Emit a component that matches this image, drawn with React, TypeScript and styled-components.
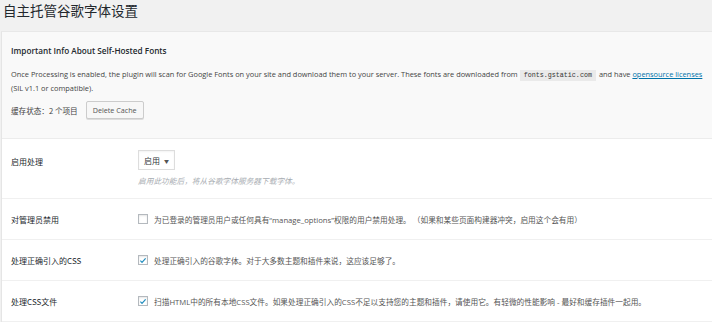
import React from 'react';
import styled, { createGlobalStyle } from 'styled-components';

const GlobalStyle = createGlobalStyle`
  html, body {
    margin: 0;
    padding: 0;
    background: #f1f1f1;
  }
  body {
    font-family: "Open Sans", "Noto Sans", "Noto Sans CJK SC", sans-serif;
    color: #444;
    width: 712px;
    overflow: hidden;
  }
`;

const Page = styled.div`
  padding: 0 0 0 1px;
`;

const Title = styled.h1`
  margin: 0;
  padding: 1px 0 0 2px;
  height: 31px;
  box-sizing: border-box;
  font-family: "Noto Sans CJK SC", sans-serif;
  font-size: 13.5px;
  font-weight: 400;
  line-height: 18px;
  color: #23282d;
`;

const Panel = styled.div`
  background: #fff;
  border-left: 1px solid #e5e5e5;
  border-top: 1px solid #e8e8e8;
`;

const InfoBox = styled.div`
  background: #f9f9f9;
  border-bottom: 1px solid #ececec;
  padding: 13px 4px 18px 9px;
  height: 107px;
  box-sizing: border-box;
`;

const InfoHeading = styled.h3`
  margin: 0 0 11px;
  font-size: 8.2px;
  font-weight: 600;
  line-height: 12px;
  color: #23282d;
`;

const Paragraph = styled.p`
  margin: 0 0 6px;
  font-size: 7.4px;
  line-height: 13px;
  color: #444;
  white-space: nowrap;
`;

const Code = styled.code`
  font-family: "Liberation Mono", "DejaVu Sans Mono", monospace;
  font-size: 6.7px;
  background: #eaeaea;
  padding: 1px 4px 2px;
  margin: 0 3px 0 2px;
  color: #333;
`;

const Link = styled.a`
  color: #0073aa;
  text-decoration: underline;
`;

const CacheRow = styled.div`
  display: flex;
  align-items: center;
  gap: 8px;
  font-family: "Noto Sans CJK SC", sans-serif;
  font-size: 7.6px;
  color: #444;
`;

const Button = styled.button`
  height: 18px;
  padding: 0 6px;
  border: 1px solid #ccc;
  border-radius: 2px;
  background: #f7f7f7;
  box-shadow: 0 1px 0 #ddd;
  font-family: "Open Sans", sans-serif;
  font-size: 7.2px;
  color: #555;
`;

const Row = styled.div<{ $h: number }>`
  display: grid;
  grid-template-columns: 127px 1fr;
  height: ${({ $h }) => $h}px;
  box-sizing: border-box;
  border-bottom: 1px solid #f0f0f0;
  align-items: center;
  padding-left: 9px;
`;

const Label = styled.div<{ $top?: boolean }>`
  font-family: "Noto Sans CJK SC", sans-serif;
  font-size: 8px;
  color: #23282d;
  align-self: ${({ $top }) => ($top ? 'start' : 'center')};
  padding-top: ${({ $top }) => ($top ? '17px' : '0')};
`;

const FieldStack = styled.div`
  display: flex;
  flex-direction: column;
  align-items: flex-start;
  gap: 5px;
  align-self: start;
  padding-top: 11px;
`;

const Select = styled.div`
  display: inline-flex;
  align-items: center;
  gap: 4px;
  height: 20px;
  box-sizing: border-box;
  padding: 0 5px;
  border: 1px solid #ddd;
  background: #fff;
  box-shadow: inset 0 1px 2px rgba(0, 0, 0, 0.05);
  font-family: "Noto Sans CJK SC", sans-serif;
  font-size: 8px;
  white-space: nowrap;
  color: #32373c;
`;

const Caret = styled.span`
  font-size: 5px;
  color: #555;
`;

const Description = styled.div`
  font-family: "Noto Sans CJK SC", sans-serif;
  font-size: 7.7px;
  font-style: italic;
  color: #a8adb2;
`;

const CheckLine = styled.label`
  display: flex;
  align-items: center;
  gap: 6px;
  font-family: "Open Sans", "Noto Sans CJK SC", sans-serif;
  font-size: 7.7px;
  color: #555;
`;

const Box = styled.span`
  width: 10px;
  height: 10px;
  box-sizing: border-box;
  border: 1px solid #b4b9be;
  background: #fff;
  box-shadow: inset 0 1px 2px rgba(0, 0, 0, 0.1);
  display: inline-flex;
  align-items: center;
  justify-content: center;
  flex: none;
`;

function Checkbox({ checked }: { checked?: boolean }) {
  return (
    <Box>
      {checked && (
        <svg width="9" height="9" viewBox="0 0 20 20">
          <path d="M3.5 10.5l4 4 9-10" fill="none" stroke="#1e8cbe" strokeWidth="3" />
        </svg>
      )}
    </Box>
  );
}

export default function App() {
  return (
    <Page>
      <GlobalStyle />
      <Title>自主托管谷歌字体设置</Title>
      <Panel>
        <InfoBox>
          <InfoHeading>Important Info About Self-Hosted Fonts</InfoHeading>
          <Paragraph>
            Once Processing is enabled, the plugin will scan for Google Fonts on your site and download them to your
            server. These fonts are downloaded from<Code>fonts.gstatic.com</Code>and have{' '}
            <Link>opensource licenses</Link>
            <br />
            (SIL v1.1 or compatible).
          </Paragraph>
          <CacheRow>
            缓存状态：2 个项目
            <Button>Delete Cache</Button>
          </CacheRow>
        </InfoBox>
        <Row $h={60}>
          <Label $top>启用处理</Label>
          <FieldStack>
            <Select>
              启用 <Caret>▼</Caret>
            </Select>
            <Description>启用此功能后，将从谷歌字体服务器下载字体。</Description>
          </FieldStack>
        </Row>
        <Row $h={41}>
          <Label>对管理员禁用</Label>
          <CheckLine>
            <Checkbox />
            为已登录的管理员用户或任何具有“manage_options”权限的用户禁用处理。 （如果和某些页面构建器冲突，启用这个会有用）
          </CheckLine>
        </Row>
        <Row $h={41}>
          <Label>处理正确引入的CSS</Label>
          <CheckLine>
            <Checkbox checked />
            处理正确引入的谷歌字体。对于大多数主题和插件来说，这应该足够了。
          </CheckLine>
        </Row>
        <Row $h={41}>
          <Label>处理CSS文件</Label>
          <CheckLine>
            <Checkbox checked />
            扫描HTML中的所有本地CSS文件。如果处理正确引入的CSS不足以支持您的主题和插件，请使用它。有轻微的性能影响 - 最好和缓存插件一起用。
          </CheckLine>
        </Row>
      </Panel>
    </Page>
  );
}
